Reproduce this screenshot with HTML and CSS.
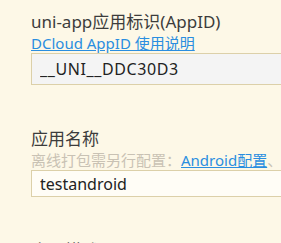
FILE: index.html
```html
<!DOCTYPE html>
<html lang="zh-CN">
<head>
  <meta charset="UTF-8" />
  <title>基础配置</title>
  <meta name="viewport" content="width=device-width, initial-scale=1.0"/>
  <link rel="stylesheet" href="styles.css">
</head>
<body>
  <div class="field">
    <div class="label">uni-app应用标识(AppID)</div>
    <div class="hint"><a href="#">DCloud AppID 使用说明</a></div>
    <input type="text" class="box box-readonly" value="__UNI__DDC30D3" readonly />
  </div>

  <div class="field">
    <div class="label">应用名称</div>
    <div class="hint">离线打包需另行配置：<a href="#">Android配置</a>、</div>
    <input type="text" class="box" value="testandroid" />
  </div>

  <div class="field">
    <div class="label">应用描述</div>
  </div>
</body>
</html>
```

FILE: styles.css
```css
html,
body {
  height: 243px;
  overflow: hidden;
}

body {
  margin: 0;
  padding: 11px 0 0 31px;
  box-sizing: border-box;
  background: #fdf8e7;
  color: #3c3c3c;
  font-family: "Noto Sans", "Noto Sans CJK SC", sans-serif;
}

.field {
  margin-bottom: 43px;
  overflow: hidden;
}

.label {
  font-size: 17px;
  line-height: 22px;
  white-space: nowrap;
}

.hint {
  font-size: 15px;
  line-height: 20px;
  color: #c9c2b4;
  white-space: nowrap;
}

.hint a {
  color: #2a8ee0;
  text-decoration: underline;
}

.box {
  display: block;
  box-sizing: border-box;
  width: 300px;
  height: 27px;
  margin: 0;
  padding: 0 8px;
  border: 1px solid #dcd0a9;
  background: #fffdf6;
  color: #222;
  font-family: "Noto Sans", "Noto Sans CJK SC", sans-serif;
  font-size: 16px;
  outline: none;
}

.box-readonly {
  height: 32px;
  background: #f4f4f4;
  letter-spacing: 0.6px;
}
```
